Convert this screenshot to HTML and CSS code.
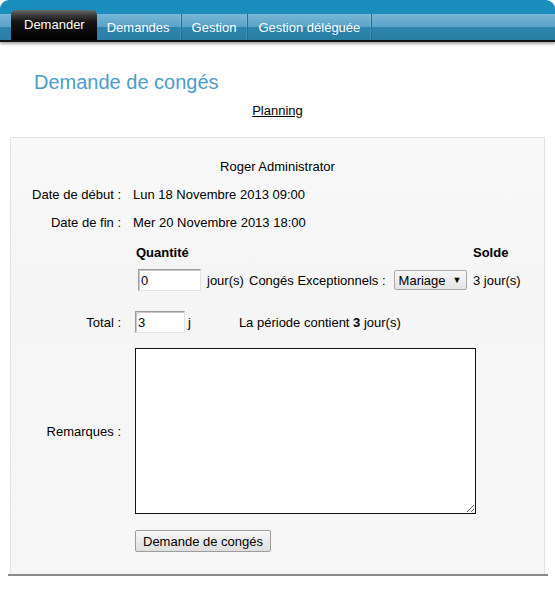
FILE: index.html
```html
<!DOCTYPE html>
<html lang="fr">
<head>
<meta charset="utf-8">
<title>Demande de congés</title>
<link rel="stylesheet" href="styles.css">
</head>
<body>
<div class="nav">
  <div class="tabs">
    <a class="tab active">Demander</a>
    <a class="tab">Demandes</a>
    <a class="tab">Gestion</a>
    <a class="tab">Gestion déléguée</a>
  </div>
</div>

<h1 class="title">Demande de congés</h1>
<p class="planning"><a href="#">Planning</a></p>

<div class="panel">
  <div class="user">Roger Administrator</div>

  <div class="row line">
    <div class="label">Date de début :</div>
    <div class="value">Lun 18 Novembre 2013 09:00</div>
  </div>
  <div class="row line">
    <div class="label">Date de fin :</div>
    <div class="value">Mer 20 Novembre 2013 18:00</div>
  </div>

  <div class="row">
    <div class="label"></div>
    <div class="value">
      <div class="qty">
        <div class="qhead">Quantité</div>
        <div class="qhead"></div>
        <div class="qhead">Solde</div>
        <div class="qcell first"><input class="field qinput" type="text" value="0"><span class="unit">jour(s)</span></div>
        <div class="qcell">Congés Exceptionnels : <span class="select">Mariage<span class="arrow">▼</span></span></div>
        <div class="qcell">3 jour(s)</div>
      </div>
    </div>
  </div>

  <div class="row total">
    <div class="label">Total :</div>
    <div class="value totalval">
      <input class="field tinput" type="text" value="3"><span class="j">j</span>
      <span class="periode">La période contient <b>3</b> jour(s)</span>
    </div>
  </div>

  <div class="row remarks">
    <div class="label">Remarques :</div>
    <div class="value"><textarea class="area"></textarea></div>
  </div>

  <div class="row">
    <div class="label"></div>
    <div class="value"><button class="btn" type="button">Demande de congés</button></div>
  </div>
</div>
<div class="panel-foot"></div>
</body>
</html>
```

FILE: styles.css
```css
html, body {
  margin: 0;
  padding: 0;
  background: #fff;
}
body {
  font-family: "Liberation Sans", Arial, sans-serif;
  font-size: 13px;
  color: #000;
}

/* navigation */
.nav {
  background: #1a8dbf;
  border-radius: 9px 9px 0 0;
  padding-top: 14px;
  border-bottom: 2px solid #111;
  box-shadow: 0 2px 3px rgba(0, 0, 0, 0.35);
}
.tabs {
  display: flex;
  align-items: flex-end;
  height: 26px;
  padding-left: 11px;
  background: linear-gradient(#78b6d6 0%, #5aa3c8 48%, #2d84ad 52%, #2a7fa7 100%);
}
.tab {
  display: block;
  height: 26px;
  line-height: 27px;
  padding: 0 11px 0 10px;
  color: #fff;
  text-decoration: none;
  border-right: 1px solid #1f6e95;
  box-shadow: inset -1px 0 0 rgba(255, 255, 255, 0.12);
}
.tab.active {
  height: 30px;
  line-height: 29px;
  padding: 0 12px 0 13px;
  border-right: none;
  border-radius: 5px 5px 0 0;
  background: linear-gradient(#6a6a6a 0%, #3a3a3a 18%, #141414 40%, #000 100%);
  box-shadow: none;
}

/* heading */
.title {
  margin: 28px 0 0 34px;
  font-size: 20px;
  line-height: 24px;
  font-weight: normal;
  color: #4b9cc7;
}
.planning {
  margin: 9px 0 0;
  text-align: center;
  line-height: 16px;
}
.planning a {
  color: #000;
  text-decoration: underline;
}

/* panel */
.panel {
  margin: 18px 10px 0 10px;
  border: 1px solid #e0e0e0;
  border-bottom: none;
  background: linear-gradient(#f9f9f9, #f5f5f5 30%, #f6f6f6);
  padding: 15px 0 22px;
}
.panel-foot {
  margin: 0 7px 0 8px;
  height: 2px;
  background: #8a8a8a;
  box-shadow: 0 1px 2px rgba(0, 0, 0, 0.25);
}
.user {
  text-align: center;
  line-height: 28px;
}
.row {
  display: flex;
  align-items: center;
}
.line {
  line-height: 28px;
}
.label {
  width: 110px;
  flex: none;
  text-align: right;
}
.value {
  margin-left: 12px;
}

/* quantity block */
.qty {
  display: grid;
  grid-template-columns: 113px 224px auto;
  margin-top: 2px;
}
.qhead {
  font-weight: bold;
  line-height: 28px;
  padding-left: 3px;
}
.qcell {
  display: flex;
  align-items: center;
  height: 26px;
  padding-left: 3px;
  white-space: nowrap;
}
.qcell.first {
  padding-left: 5px;
}
.field {
  box-sizing: border-box;
  height: 22px;
  margin: 0;
  padding: 1px 2px 0;
  font-family: "Liberation Sans", Arial, sans-serif;
  font-size: 13px;
  color: #000;
  background: #fff;
  border: 1px solid;
  border-color: #9a9a9a #e2e2e2 #e2e2e2 #9a9a9a;
  box-shadow: inset 1px 1px 0 #c8c8c8;
  outline: none;
}
.qinput {
  width: 63px;
}
.unit {
  margin-left: 6px;
}
.select {
  display: inline-flex;
  align-items: center;
  box-sizing: border-box;
  height: 20px;
  margin-left: 8px;
  padding: 0 5px 0 4px;
  border: 1px solid #a8a8a8;
  border-radius: 2px;
  background: linear-gradient(#f6f6f6, #e4e4e4);
}
.arrow {
  font-size: 9px;
  margin-left: 7px;
}

/* total row */
.total {
  margin-top: 15px;
  height: 28px;
}
.totalval {
  display: flex;
  align-items: center;
  margin-left: 14px;
}
.tinput {
  width: 50px;
}
.j {
  margin-left: 3px;
}
.periode {
  margin-left: 48px;
}

/* remarks */
.remarks {
  margin-top: 12px;
}
.remarks .value {
  margin-left: 14px;
  display: flex;
}
.area {
  box-sizing: border-box;
  width: 341px;
  height: 166px;
  margin: 0;
  border: 1px solid #111;
  background: #fff;
  resize: both;
}

/* button */
.btn {
  box-sizing: border-box;
  margin: 16px 0 0 2px;
  width: 136px;
  height: 22px;
  padding: 0;
  font-family: "Liberation Sans", Arial, sans-serif;
  font-size: 13px;
  color: #000;
  border: 1px solid #9c9c9c;
  border-radius: 2px;
  background: linear-gradient(#f7f7f7, #dedede);
}
```
